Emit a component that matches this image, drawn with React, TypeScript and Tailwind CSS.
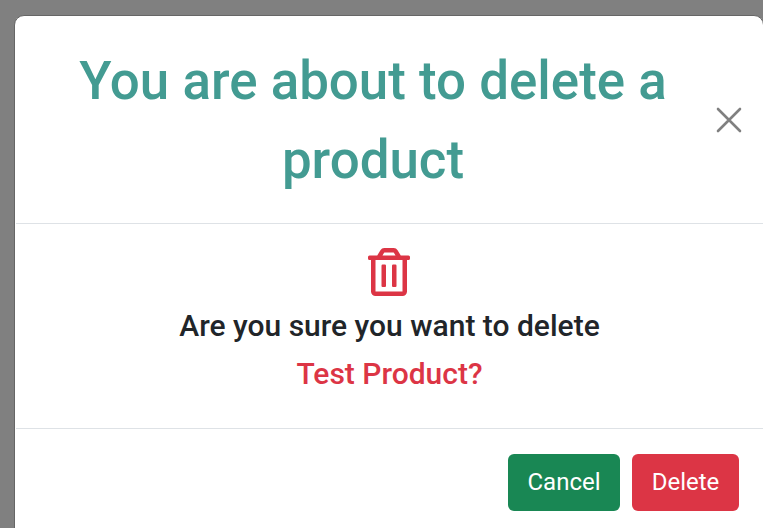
import React from "react";

function TrashIcon() {
  return (
    <svg width="42" height="48" viewBox="0 0 448 512" fill="#dc3545" className="mr-px block">
      <path d="M268 416h24a12 12 0 0 0 12-12V188a12 12 0 0 0-12-12h-24a12 12 0 0 0-12 12v216a12 12 0 0 0 12 12zM432 80h-82.410l-34-56.700A48 48 0 0 0 274.410 0H173.590a48 48 0 0 0-41.160 23.300L98.410 80H16A16 16 0 0 0 0 96v16a16 16 0 0 0 16 16h16v336a48 48 0 0 0 48 48h288a48 48 0 0 0 48-48V128h16a16 16 0 0 0 16-16V96a16 16 0 0 0-16-16zM171.840 50.910A6 6 0 0 1 177 48h94a6 6 0 0 1 5.150 2.910L293.610 80H154.390zM368 464H80V128h288zm-212-48h24a12 12 0 0 0 12-12V188a12 12 0 0 0-12-12h-24a12 12 0 0 0-12 12v216a12 12 0 0 0 12 12z" />
    </svg>
  );
}

export default function App() {
  return (
    <div className="h-[528px] w-[763px] overflow-hidden bg-[#808080] pl-[14px] pt-[15px] font-['Roboto',sans-serif] font-medium">
      <section className="h-[540px] w-[750px] rounded-[10px] border border-[#666] bg-white">
        <header className="ml-px flex h-[208px] items-center border-b border-[#dee2e6]">
          <h1 className="ml-[20px] mt-[2px] w-[680px] shrink-0 pr-[6px] text-center text-[52.9px] leading-[79px] text-[#439b92]">
            You are about to delete a product
          </h1>
          <button aria-label="Close">
            <svg width="26" height="26" viewBox="0 0 26 26" fill="none" stroke="#808080" strokeWidth="2.6" strokeLinecap="round">
              <path d="M2 2L24 24M24 2L2 24" />
            </svg>
          </button>
        </header>
        <main className="ml-px flex h-[205px] flex-col items-center border-b border-[#dee2e6] pt-[24px] text-[30px] leading-[48px]">
          <TrashIcon />
          <p className="mt-[6px] text-[#212529]">Are you sure you want to delete</p>
          <p className="text-[#dc3545]">Test Product?</p>
        </main>
        <footer className="flex justify-end gap-3 pr-[24px] pt-[25px] text-[24px] font-normal leading-[36px]">
          <button className="h-[57px] w-[112px] rounded-[6px] bg-[#198754] pb-[2px] text-white">Cancel</button>
          <button className="h-[57px] w-[107px] rounded-[6px] bg-[#dc3545] pb-[2px] text-white">Delete</button>
        </footer>
      </section>
    </div>
  );
}
